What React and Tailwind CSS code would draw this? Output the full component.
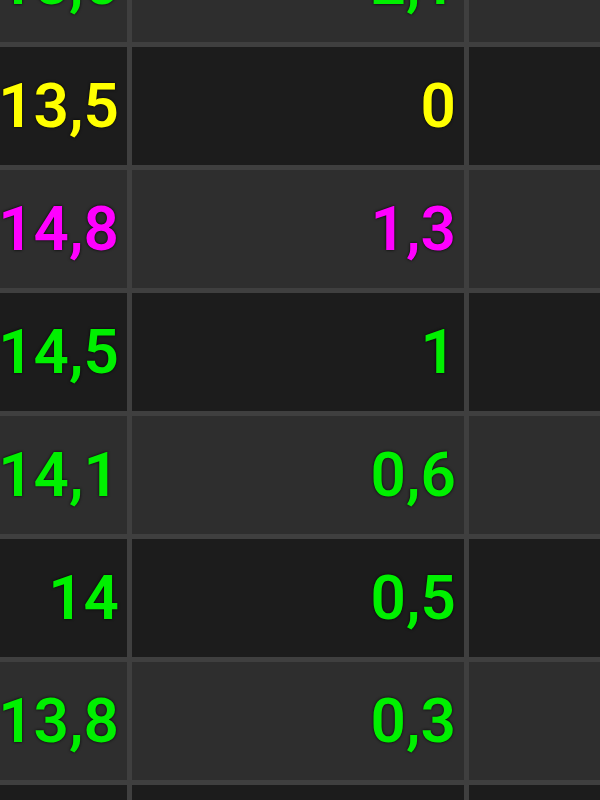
export default function App() {
  const rows = [
    { a: "15,6", b: "2,1", c: "text-[#00f000]", light: true },
    { a: "13,5", b: "0", c: "text-[#ffff00]", light: false },
    { a: "14,8", b: "1,3", c: "text-[#ff00ff]", light: true },
    { a: "14,5", b: "1", c: "text-[#00f000]", light: false },
    { a: "14,1", b: "0,6", c: "text-[#00f000]", light: true },
    { a: "14", b: "0,5", c: "text-[#00f000]", light: false },
    { a: "13,8", b: "0,3", c: "text-[#00f000]", light: true },
    { a: "", b: "", c: "text-[#00f000]", light: false },
  ];
  return (
    <div className="w-[600px] h-[800px] overflow-hidden bg-[#3f3f3f]">
      <div className="-mt-[76px] grid grid-cols-[127px_332px_1fr] gap-[5px] bg-[#3f3f3f] font-['Roboto',sans-serif]">
        {rows.map((r, i) => {
          const bg = r.light ? "bg-[#2e2e2e]" : "bg-[#1c1c1c]";
          const txt = `h-[118px] flex items-center justify-end pr-[8px] text-[62px] font-semibold leading-none [text-shadow:0_0_3px_#000] ${r.c} ${bg}`;
          return [
            <div key={i + "a"} className={txt}>{r.a}</div>,
            <div key={i + "b"} className={txt}>{r.b}</div>,
            <div key={i + "c"} className={`h-[118px] ${bg}`}></div>,
          ];
        })}
      </div>
    </div>
  );
}
